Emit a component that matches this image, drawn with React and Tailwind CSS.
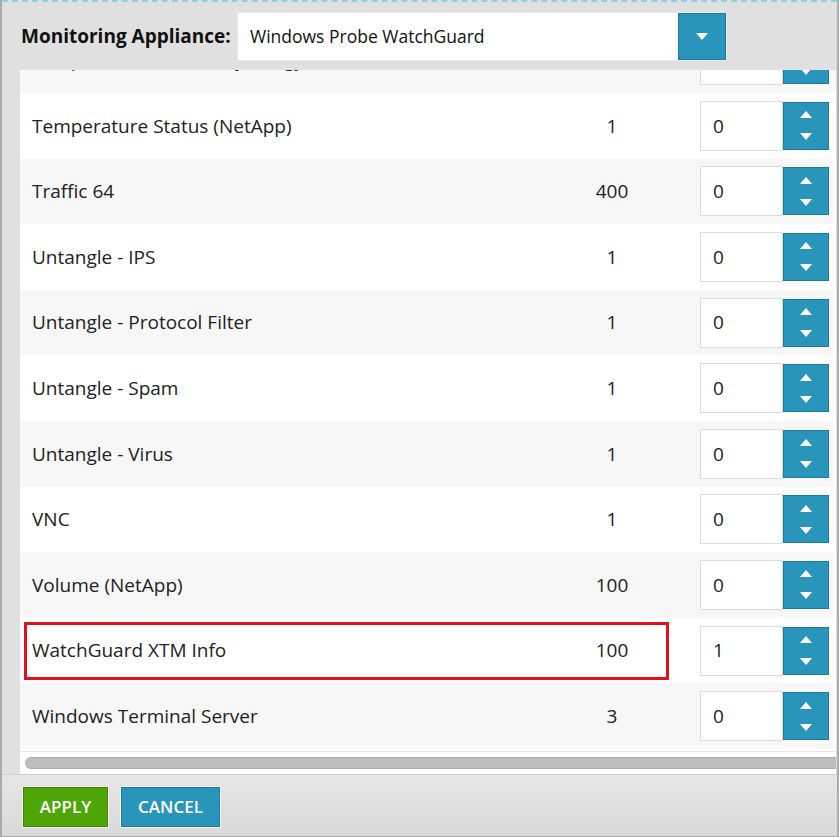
import React from "react";

const rows = [
  ["Temperature Status (NetApp)", "1", "0"],
  ["Traffic 64", "400", "0"],
  ["Untangle - IPS", "1", "0"],
  ["Untangle - Protocol Filter", "1", "0"],
  ["Untangle - Spam", "1", "0"],
  ["Untangle - Virus", "1", "0"],
  ["VNC", "1", "0"],
  ["Volume (NetApp)", "100", "0"],
  ["WatchGuard XTM Info", "100", "1", true],
  ["Windows Terminal Server", "3", "0"],
];

function Caret({ up }) {
  return (
    <svg width="12" height="7" viewBox="0 0 12 7">
      <path d={up ? "M0 7 L6 0 L12 7 Z" : "M0 0 L12 0 L6 7 Z"} fill="#fff" />
    </svg>
  );
}

function Spinner({ value }) {
  return (
    <div className="flex items-center">
      <div className="w-[83px] h-[50px] bg-white border border-[#dcdcdc] flex items-center pl-3 text-[19px] text-[#222]">
        {value}
      </div>
      <div className="w-[46px] h-[48px] bg-[#2a95bb] border border-[#1d7ba1] flex flex-col items-center justify-center gap-[15px]">
        <Caret up />
        <Caret />
      </div>
    </div>
  );
}

function Row({ name, count, value, highlight, shade }) {
  return (
    <div className={"relative flex items-center h-[65.6px] " + (shade ? "bg-[#f7f7f7]" : "bg-white")}>
      <div className="flex-1 pl-3 text-[19px] text-[#222]">{name}</div>
      <div className="w-[102px] text-center text-[19px] text-[#222]">{count}</div>
      <div className="ml-[37px] mr-[4px]">
        <Spinner value={value} />
      </div>
      {highlight && (
        <div className="absolute left-[4px] top-[4px] w-[645px] h-[58px] border-[3px] border-[#e3101b]" />
      )}
    </div>
  );
}

export default function App() {
  return (
    <div
      className="w-[839px] h-[837px] flex flex-col bg-[#e0e0e0] border-l-2 border-r-2 border-b border-[#ababab] overflow-hidden"
      style={{ fontFamily: '"Open Sans", "Liberation Sans", sans-serif' }}
    >
      <div className="border-t-2 border-dashed border-[#8fd0e8]" />

      {/* header */}
      <div className="flex items-center pt-[10px] pl-[19px]">
        <div className="text-[19px] font-bold text-[#111] w-[216px]">Monitoring Appliance:</div>
        <div className="flex h-[49px] w-[490px] bg-white border border-[#e8e8e8]">
          <div className="flex-1 flex items-center pl-3 text-[17.5px] text-[#111]">
            Windows Probe WatchGuard
          </div>
          <div className="w-[48px] h-full bg-[#2a95bb] border border-[#1d7ba1] flex items-center justify-center">
            <Caret />
          </div>
        </div>
      </div>

      {/* table panel */}
      <div className="ml-[18px] mr-[1px] mt-[9px] bg-white flex flex-col">
        <div className="h-[23px] overflow-hidden bg-[#f7f7f7] flex flex-col justify-end pr-[3px]">
          <div className="shrink-0">
            <Row name="Temperature Sensor (Synology)" count="1" value="0" shade />
          </div>
        </div>
        <div className="pr-[3px]">
          {rows.map(([name, count, value, hl], i) => (
            <Row key={name} name={name} count={count} value={value} highlight={hl} shade={i % 2 === 1} />
          ))}
        </div>
        <div className="h-[3px] border-b border-[#e6e6e6]" />
        <div className="h-[22px] pt-[5px] pl-[5px]">
          <div className="h-[12px] bg-[#bdbdbd] border-y border-[#adadad] rounded-l-full" />
        </div>
      </div>

      {/* footer */}
      <div className="flex-1 flex items-start gap-[13px] pl-[21px] pt-[12px] bg-gradient-to-b from-[#e6e6e6] to-[#d9d9d9] border-t border-[#d0d0d0]">
        <button className="w-[85px] h-[40px] bg-[#4ea606] border border-[#3b8a00] text-white text-[17px] font-semibold outline outline-1 outline-white">
          APPLY
        </button>
        <button className="w-[99px] h-[40px] bg-[#2a95bb] border border-[#1d7ba1] text-white text-[17px] font-semibold outline outline-1 outline-white">
          CANCEL
        </button>
      </div>
    </div>
  );
}
